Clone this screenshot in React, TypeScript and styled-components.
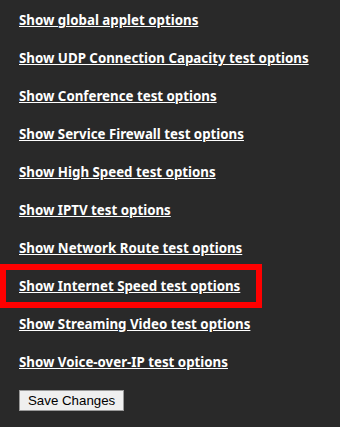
import styled, { createGlobalStyle } from 'styled-components';

const GlobalStyle = createGlobalStyle`
  html, body {
    margin: 0;
    padding: 0;
    background-color: #292929;
  }
`

const Page = styled.div`
  width: 340px;
  min-height: 427px;
  box-sizing: border-box;
  padding: 12px 0 0 19px;
  display: flex;
  flex-direction: column;
  align-items: flex-start;
  gap: 21px;
  font-family: "Noto Sans", "DejaVu Sans", sans-serif;
`

const OptionLink = styled.a<{ $highlight?: boolean }>`
  position: relative;
  display: block;
  color: #fff;
  font-size: 13.3px;
  font-weight: bold;
  line-height: 17px;
  text-decoration: underline;
  cursor: pointer;

  ${(p) => p.$highlight && `
    &::after {
      content: '';
      position: absolute;
      left: -19px;
      top: -14px;
      width: 262px;
      height: 44px;
      box-sizing: border-box;
      border: 6px solid #ff0000;
    }
  `}
`

const SaveButton = styled.button`
  margin-top: -2px;
  height: 21px;
  padding: 0 8px;
  font-family: "Liberation Sans", Arial, sans-serif;
  font-size: 13.3px;
  color: #000;
  background-color: #efefef;
  border: 1px solid #9a9a9a;
  border-radius: 0;
`

const options = [
  'Show global applet options',
  'Show UDP Connection Capacity test options',
  'Show Conference test options',
  'Show Service Firewall test options',
  'Show High Speed test options',
  'Show IPTV test options',
  'Show Network Route test options',
  'Show Internet Speed test options',
  'Show Streaming Video test options',
  'Show Voice-over-IP test options',
]

const App = () => {
  return (
    <>
      <GlobalStyle />
      <Page>
        {options.map((label) => (
          <OptionLink key={label} $highlight={label === 'Show Internet Speed test options'}>
            {label}
          </OptionLink>
        ))}
        <SaveButton>Save Changes</SaveButton>
      </Page>
    </>
  )
}

export default App
